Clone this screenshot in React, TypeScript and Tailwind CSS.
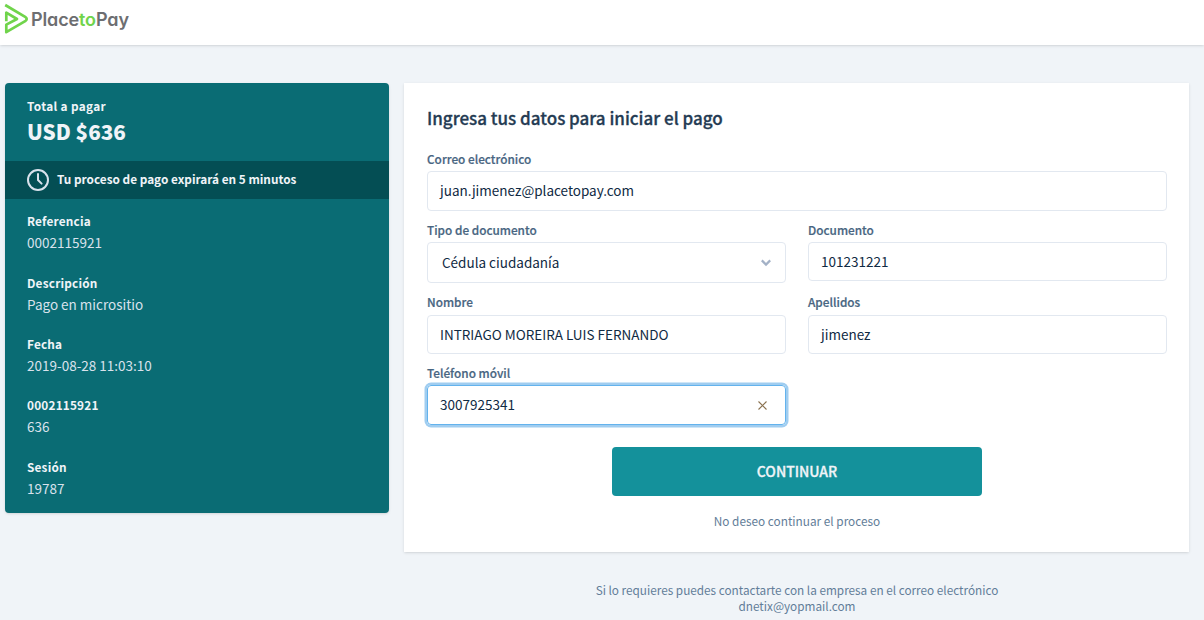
import type { ReactNode } from "react";

function Logo() {
  return (
    <svg width="132" height="36" viewBox="0 0 132 36" className="block">
      <g fill="none" stroke="#70d44b" strokeWidth="2.7" strokeLinejoin="round" strokeLinecap="butt">
        <path d="M5.2 5 L25.6 17.2 Q27.8 19 25.6 20.8 L6.3 32.2 V24.6 L17 19 L6.3 12.6 V21.2" />
      </g>
      <text
        x="31"
        y="26"
        className="font-['Inter',sans-serif] text-[18px] font-semibold [font-feature-settings:'cv11']"
        textLength="98"
        fill="#6d6e71"
      >
        Place<tspan fill="#70d44b">to</tspan>Pay
      </text>
    </svg>
  );
}

const details = [
  { label: "Referencia", value: "0002115921" },
  { label: "Descripción", value: "Pago en micrositio" },
  { label: "Fecha", value: "2019-08-28 11:03:10" },
  { label: "0002115921", value: "636" },
  { label: "Sesión", value: "19787" },
];

function Summary() {
  return (
    <aside className="h-[430px] w-96 shrink-0 overflow-hidden rounded bg-[#0a6c74] text-[#f0f4f8] shadow">
      <div className="h-[78px] px-[22px] pt-[13px]">
        <div className="text-[11.8px] leading-5 font-bold tracking-[0.35px]">Total a pagar</div>
        <div className="text-[20.7px] leading-[30px] font-black">USD $636</div>
      </div>
      <div className="flex h-[38px] items-center gap-2 bg-[#044e54] px-[22px]">
        <svg width="22" height="22" viewBox="0 0 22 22" fill="none" stroke="#d9e2ec" strokeWidth="2">
          <circle cx="11" cy="11" r="10" />
          <path d="M11 5v6l3.6 3.6" strokeLinecap="round" strokeLinejoin="round" />
        </svg>
        <span className="pb-0.5 text-[11.8px] leading-5 font-bold">Tu proceso de pago expirará en 5 minutos</span>
      </div>
      <dl className="flex flex-col gap-[19.4px] px-[22px] pt-[12.15px]">
        {details.map((d) => (
          <div key={d.label}>
            <dt className="text-[11.8px] leading-5 font-bold tracking-[0.2px]">{d.label}</dt>
            <dd className="text-[13.5px] leading-[22px] text-[#d9e2ec]">{d.value}</dd>
          </div>
        ))}
      </dl>
    </aside>
  );
}

function Label({ children }: { children: ReactNode }) {
  return (
    <div className="text-[11.8px] leading-[18px] font-medium text-[#486581] [-webkit-text-stroke:0.2px]">
      {children}
    </div>
  );
}

function Form() {
  return (
    <main className="flex h-[469px] w-[785px] shrink-0 flex-col bg-white pr-[22px] pl-[23px] shadow">
      <h1 className="mt-[21px] text-[17px] leading-7 font-medium text-[#243b53] [-webkit-text-stroke:0.3px]">
        Ingresa tus datos para iniciar el pago
      </h1>
      <div className="mt-[18px]">
        <Label>Correo electrónico</Label>
        <div className="mt-[3px] flex h-10 items-center rounded border border-[#e2e8f0] px-3 pb-px text-[13.5px] text-[#102a43]">
          juan.jimenez@placetopay.com
        </div>
      </div>
      <div className="mt-2.5 grid grid-cols-2 gap-x-[22px]">
        <div className="h-[72px]">
          <Label>Tipo de documento</Label>
          <div className="mt-[3px] flex h-[41px] items-center justify-between rounded border border-[#e2e8f0] px-3.5 text-[13.5px] text-[#102a43]">
            Cédula ciudadanía
            <svg width="10" height="8" viewBox="0 0 10 8" fill="none" stroke="#a3b1c6" strokeWidth="2.2">
              <path d="M0.8 1.4 5 5.6 9.2 1.4" />
            </svg>
          </div>
        </div>
        <div className="h-[72px]">
          <Label>Documento</Label>
          <div className="mt-[3px] flex h-[39px] items-center rounded border border-[#e2e8f0] px-3 text-[13.5px] text-[#102a43]">
            101231221
          </div>
        </div>
        <div className="h-[71px]">
          <Label>Nombre</Label>
          <div className="mt-1 flex h-[39px] items-center rounded border border-[#e2e8f0] px-3 text-[13.5px] text-[#102a43]">
            INTRIAGO MOREIRA LUIS FERNANDO
          </div>
        </div>
        <div className="h-[71px]">
          <Label>Apellidos</Label>
          <div className="mt-1 flex h-[39px] items-center rounded border border-[#e2e8f0] px-3 text-[13.5px] text-[#102a43]">
            jimenez
          </div>
        </div>
        <div>
          <Label>Teléfono móvil</Label>
          <div className="mt-[3px] flex h-10 items-center justify-between rounded border border-[#63b3ed] pr-[18px] pl-3 text-[13.5px] text-[#102a43] ring-[2.5px] ring-[#a0cdf0]">
            <span className="pb-px">3007925341</span>
            <svg width="9" height="9" viewBox="0 0 9 9" fill="none" stroke="#8a7250" strokeWidth="1.1">
              <path d="M.5.5l8 8M8.500.5l-8 8" />
            </svg>
          </div>
        </div>
      </div>
      <div className="mt-[22px] flex flex-col items-center">
        <button className="h-[49px] w-[370px] rounded bg-[#14919b] text-[14px] font-medium text-[#f0f4f8] [-webkit-text-stroke:0.3px]">
          CONTINUAR
        </button>
        <a className="mt-[15px] text-[11.8px] leading-5 text-[#627d98]">No deseo continuar el proceso</a>
      </div>
    </main>
  );
}

export default function App() {
  return (
    <div className="h-[620px] w-[1204px] overflow-hidden bg-[#f0f4f8] font-['Noto_Sans_CJK_SC',sans-serif]">
      <header className="h-[45px] bg-white shadow-sm">
        <Logo />
      </header>
      <div className="flex gap-[15px] pt-[38px] pl-[5px]">
        <Summary />
        <div>
          <Form />
          <footer className="pt-[30px] pl-px text-center text-[11.78px] leading-4 text-[#627d98]">
            <p>Si lo requieres puedes contactarte con la empresa en el correo electrónico</p>
            <p>dnetix@yopmail.com</p>
          </footer>
        </div>
      </div>
    </div>
  );
}
